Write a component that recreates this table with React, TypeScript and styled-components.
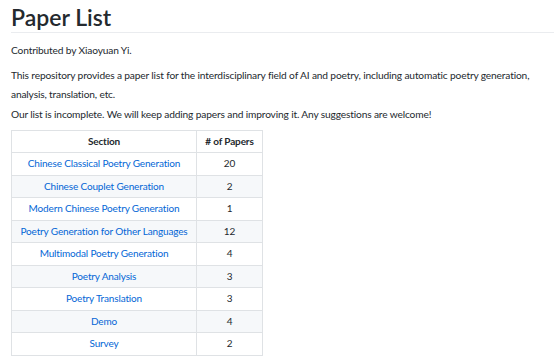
import React from "react";
import styled, { createGlobalStyle } from "styled-components";

const GlobalStyle = createGlobalStyle`
  html, body {
    margin: 0;
    padding: 0;
    background: #ffffff;
  }
  body {
    font-family: Lato, "Open Sans", sans-serif;
    color: #24292e;
  }
`;

const Page = styled.article`
  padding: 4px 0 0 11px;
  font-size: 10.2px;
  letter-spacing: -0.15px;
  line-height: 19px;
`;

const Title = styled.h1`
  margin: 0 0 8px;
  padding-bottom: 2px;
  font-size: 23px;
  letter-spacing: 0;
  line-height: 26px;
  font-weight: 600;
  border-bottom: 1px solid #eaecef;
`;

const Para = styled.p<{ $gap?: number }>`
  margin: 0 0 ${(p) => p.$gap ?? 6}px;
`;

const Table = styled.table`
  border-collapse: collapse;
  white-space: nowrap;
  font-size: 10px;
`;

const HeadRow = styled.tr`
  height: 22px;
`;

const Th = styled.th<{ $w: number }>`
  width: ${(p) => p.$w}px;
  padding: 0 8px;
  border: 1px solid #dfe2e5;
  font-weight: 700;
  text-align: center;
  box-sizing: border-box;
`;

const Row = styled.tr`
  height: 22.5px;
  background: #ffffff;
  &:nth-child(even) {
    background: #f6f8fa;
  }
`;

const Td = styled.td`
  padding: 0 8px;
  border: 1px solid #dfe2e5;
  text-align: center;
`;

const Link = styled.a`
  color: #0366d6;
  text-decoration: none;
`;

const sections: [string, number][] = [
  ["Chinese Classical Poetry Generation", 20],
  ["Chinese Couplet Generation", 2],
  ["Modern Chinese Poetry Generation", 1],
  ["Poetry Generation for Other Languages", 12],
  ["Multimodal Poetry Generation", 4],
  ["Poetry Analysis", 3],
  ["Poetry Translation", 3],
  ["Demo", 4],
  ["Survey", 2],
];

export default function App() {
  return (
    <>
      <GlobalStyle />
      <Page>
        <Title>Paper List</Title>
        <Para>Contributed by Xiaoyuan Yi.</Para>
        <Para $gap={1}>
          This repository provides a paper list for the interdisciplinary field
          of AI and poetry, including automatic poetry generation, analysis,
          translation, etc.
        </Para>
        <Para $gap={6}>
          Our list is incomplete. We will keep adding papers and improving it.
          Any suggestions are welcome!
        </Para>
        <Table>
          <thead>
            <HeadRow>
              <Th $w={185}>Section</Th>
              <Th $w={66}># of Papers</Th>
            </HeadRow>
          </thead>
          <tbody>
            {sections.map(([name, count]) => (
              <Row key={name}>
                <Td>
                  <Link href="#">{name}</Link>
                </Td>
                <Td>{count}</Td>
              </Row>
            ))}
          </tbody>
        </Table>
      </Page>
    </>
  );
}
